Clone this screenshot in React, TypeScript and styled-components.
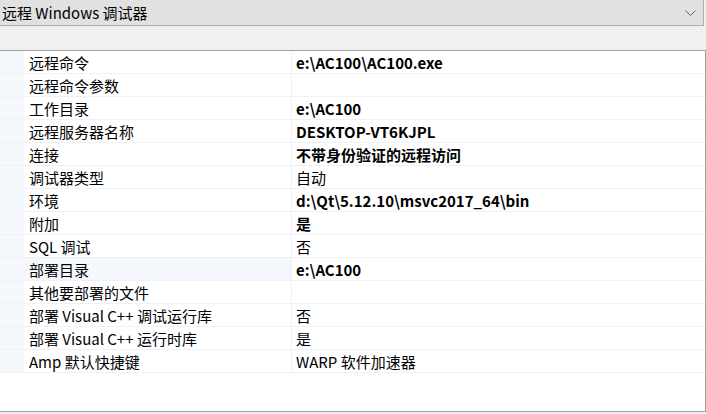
import React from 'react';
import styled, { createGlobalStyle } from 'styled-components';

const Global = createGlobalStyle`
  html, body {
    margin: 0;
    padding: 0;
    background: #f0f0f0;
    overflow: hidden;
    font-family: "Noto Sans CJK SC", "Noto Sans", sans-serif;
    color: #000;
  }
`;

type Prop = { name: string; value: string; bold?: boolean; selected?: boolean };

const props: Prop[] = [
  { name: '远程命令', value: 'e:\\AC100\\AC100.exe', bold: true },
  { name: '远程命令参数', value: '' },
  { name: '工作目录', value: 'e:\\AC100', bold: true },
  { name: '远程服务器名称', value: 'DESKTOP-VT6KJPL', bold: true },
  { name: '连接', value: '不带身份验证的远程访问', bold: true },
  { name: '调试器类型', value: '自动' },
  { name: '环境', value: 'd:\\Qt\\5.12.10\\msvc2017_64\\bin', bold: true },
  { name: '附加', value: '是', bold: true },
  { name: 'SQL 调试', value: '否' },
  { name: '部署目录', value: 'e:\\AC100', bold: true, selected: true },
  { name: '其他要部署的文件', value: '' },
  { name: '部署 Visual C++ 调试运行库', value: '否' },
  { name: '部署 Visual C++ 运行时库', value: '是' },
  { name: 'Amp 默认快捷键', value: 'WARP 软件加速器' },
];

const Page = styled.div`
  width: 706px;
  height: 414px;
  display: flex;
  flex-direction: column;
`;

const Combo = styled.div`
  box-sizing: border-box;
  width: 704px;
  height: 26px;
  background: #e1e1e1;
  border: 1px solid #adadad;
  border-left: none;
  border-top: none;
  display: flex;
  align-items: center;
  justify-content: space-between;
  padding: 0 7px 0 2px;
  font-size: 15px;
`;

const Spacer = styled.div`
  height: 24px;
`;

const Panel = styled.div`
  box-sizing: border-box;
  width: 706px;
  height: 362px;
  background: #fff;
  border: 1px solid #a0a0a0;
  border-left: none;
`;

const Row = styled.div`
  display: grid;
  grid-template-columns: 24px 268px 1fr;
  height: 23px;
  box-sizing: border-box;
  border-bottom: 1px solid #eef1f7;
`;

const Gutter = styled.div`
  background: #f4f7fc;
`;

const Cell = styled.div<{ $bold?: boolean; $sel?: boolean }>`
  display: flex;
  align-items: center;
  font-size: 15px;
  white-space: nowrap;
  overflow: hidden;
  font-weight: ${(p) => (p.$bold ? 700 : 400)};
  background: ${(p) => (p.$sel ? '#f4f7fc' : 'transparent')};
`;

const Name = styled(Cell)`
  padding-left: 5px;
  border-right: 1px solid #eef1f7;
`;

const Value = styled(Cell)`
  padding-left: 4px;
`;

export default function App() {
  return (
    <Page>
      <Global />
      <Combo>
        <span>远程 Windows 调试器</span>
        <svg width="11" height="6" viewBox="0 0 11 6">
          <path d="M0.5 0.5 L5.5 5.5 L10.5 0.5" fill="none" stroke="#606060" strokeWidth="1" />
        </svg>
      </Combo>
      <Spacer />
      <Panel>
        {props.map((p) => (
          <Row key={p.name}>
            <Gutter />
            <Name $sel={p.selected}>{p.name}</Name>
            <Value $bold={p.bold}>{p.value}</Value>
          </Row>
        ))}
      </Panel>
    </Page>
  );
}
